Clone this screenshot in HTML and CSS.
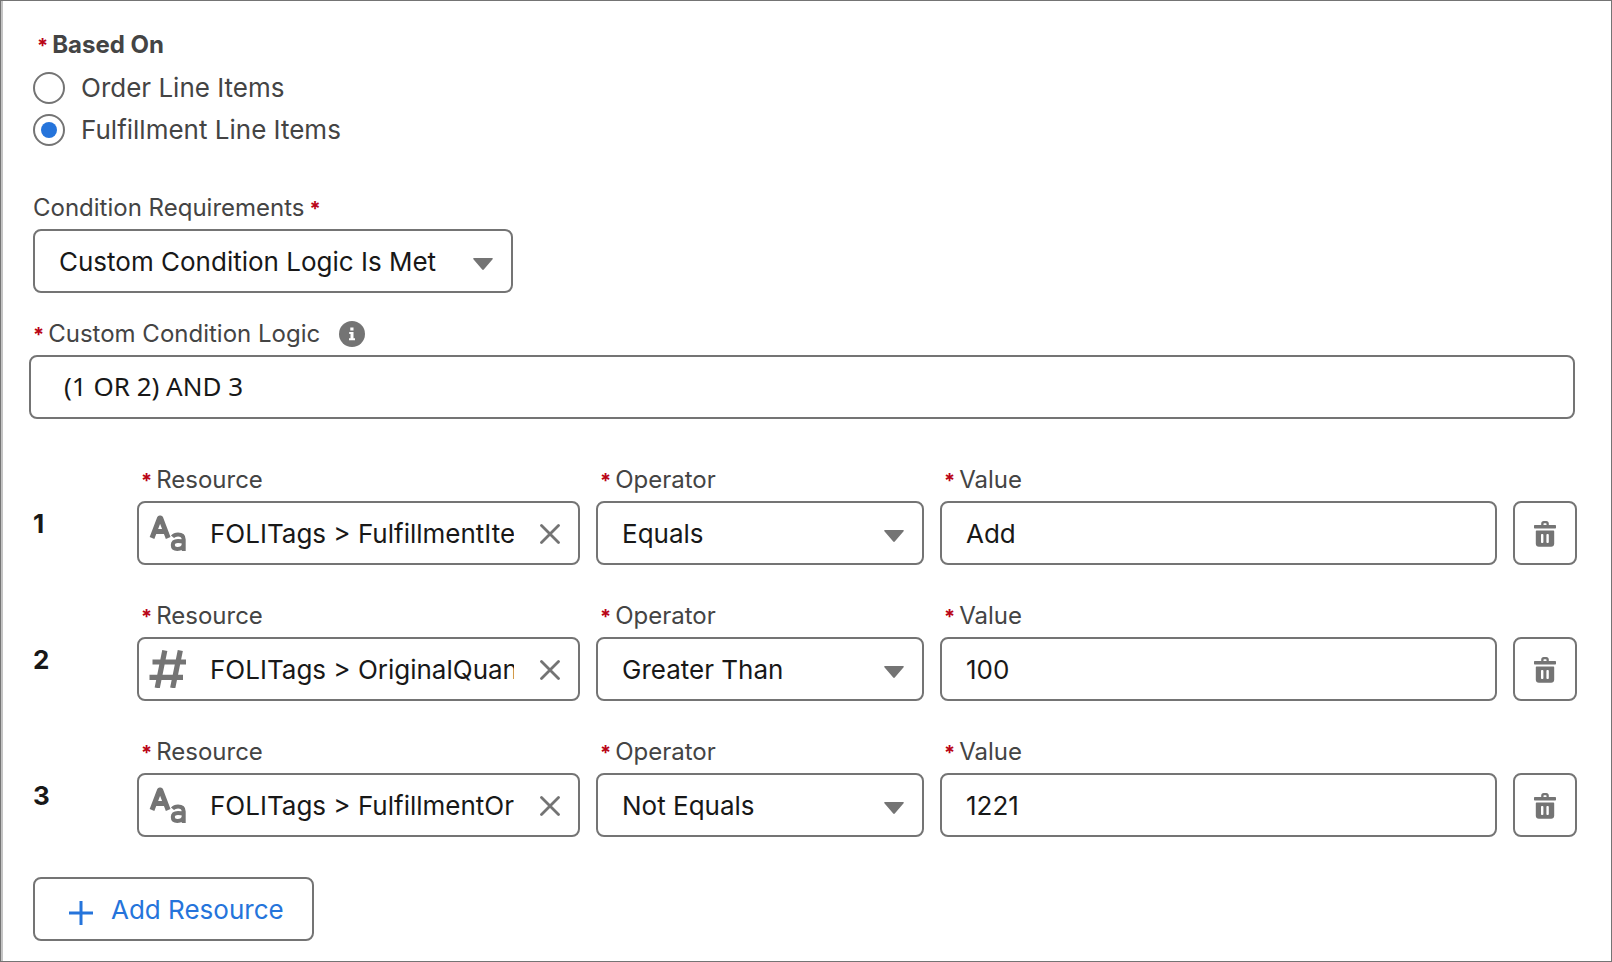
FILE: index.html
```html
<!DOCTYPE html>
<html lang="en">
<head>
<meta charset="utf-8">
<title>Condition Requirements</title>
<link rel="stylesheet" href="styles.css">
</head>
<body>
<svg class="sprite" aria-hidden="true">
  <symbol id="arrow" viewBox="0 0 20 12"><path d="M1 0h18c1 0 1 .8.6 1.300L10.800 11.500c-.5.6-1.100.6-1.600 0L.4 1.300C0 .8 0 0 1 0z"/></symbol>
  <symbol id="close" viewBox="0 0 20 20"><path d="M1.500 1.500l17 17M18.500 1.500l-17 17" fill="none" stroke="currentColor" stroke-width="2.800" stroke-linecap="round"/></symbol>
  <symbol id="trash" viewBox="0 0 22 26"><path fill-rule="evenodd" d="M1 4h6.200V2.500C7.200 1 8.200 0 9.700 0h2.600c1.500 0 2.500 1 2.500 2.500V4H21c.6 0 1 .4 1 1v1.500c0 .6-.4 1-1 1H1c-.6 0-1-.4-1-1V5c0-.6.4-1 1-1zm8.500 0h3V2.800c0-.3-.2-.5-.5-.5h-2c-.3 0-.5.2-.5.5zM2.800 9.500h16.400c.6 0 1 .4 1 1v12.200c0 1.800-1.300 3.100-3.100 3.100H4.900c-1.800 0-3.100-1.300-3.100-3.100V10.500c0-.6.4-1 1-1zM8.200 13c-.7 0-1.200.4-1.200 1v7c0 .6.500 1 1.200 1s1.200-.4 1.200-1v-7c0-.6-.5-1-1.200-1zm5.400 0c-.7 0-1.200.4-1.200 1v7c0 .6.500 1 1.200 1s1.200-.4 1.200-1v-7c0-.6-.5-1-1.200-1z"/></symbol>
  <symbol id="text-type" viewBox="0 0 38 38">
    <path fill="none" stroke="currentColor" stroke-width="5" stroke-linejoin="round" d="M3 24L10.600 4h1L19.200 24M6 17.500h10.500"/>
    <path fill="none" stroke="currentColor" stroke-width="4" d="M23.500 22.800c1.500-1.800 3.500-2.400 5.500-2.400 3.600 0 5.700 1.600 5.700 5V37M34.700 27.700c-2-.5-3.700-.7-5.700-.7-3.400 0-5.200 1.500-5.200 4s1.800 3.900 4.500 3.900c3.200 0 6.400-1.900 6.400-5"/>
  </symbol>
  <symbol id="number-type" viewBox="0 0 38 38"><path fill="none" stroke="currentColor" stroke-width="5.200" d="M15.800.5L8.200 38M31.300.5L23.700 38M3.500 12h33.500M.5 27.300h33.500"/></symbol>
</svg>
<form class="panel">
  <fieldset class="choices">
    <legend class="label label--strong"><span class="req">*</span>Based On</legend>
    <label class="choice"><input type="radio" name="basis">Order Line Items</label>
    <label class="choice"><input type="radio" name="basis" checked>Fulfillment Line Items</label>
  </fieldset>

  <div class="field field--requirements">
    <label class="label label--flush" for="req">Condition Requirements<span class="req">*</span></label>
    <div class="select"><select id="req"><option>Custom Condition Logic Is Met</option></select><svg class="arrow"><use href="#arrow"/></svg></div>
  </div>

  <div class="field field--logic">
    <div class="label-line">
      <label class="label" for="logic"><span class="req">*</span>Custom Condition Logic</label>
      <svg class="info" viewBox="0 0 26 26"><circle cx="13" cy="13" r="13"/><path fill="#fff" d="M11.300 6.500h3.200v3h-3.200zM10.200 11h4.300v6.200H16v2h-6v-2h1.500v-4.200h-1.300z"/></svg>
    </div>
    <input class="control control--logic" id="logic" type="text" value="(1 OR 2) AND 3">
  </div>

  <div class="conditions">
    <div class="condition">
      <span class="index">1</span>
      <div class="field resource">
        <label class="label" for="r1"><span class="req">*</span>Resource</label>
        <div class="lookup"><svg class="type"><use href="#text-type"/></svg><input id="r1" type="text" value="FOLITags &gt; FulfillmentItemAction"><button class="clear" type="button" aria-label="Clear"><svg><use href="#close"/></svg></button></div>
      </div>
      <div class="field operator">
        <label class="label" for="o1"><span class="req">*</span>Operator</label>
        <div class="select"><select id="o1"><option>Equals</option></select><svg class="arrow"><use href="#arrow"/></svg></div>
      </div>
      <div class="field value">
        <label class="label" for="v1"><span class="req">*</span>Value</label>
        <input class="control" id="v1" type="text" value="Add">
      </div>
      <button class="delete" type="button" aria-label="Delete"><svg><use href="#trash"/></svg></button>
    </div>
    <div class="condition">
      <span class="index">2</span>
      <div class="field resource">
        <label class="label" for="r2"><span class="req">*</span>Resource</label>
        <div class="lookup"><svg class="type"><use href="#number-type"/></svg><input id="r2" type="text" value="FOLITags &gt; OriginalQuantity"><button class="clear" type="button" aria-label="Clear"><svg><use href="#close"/></svg></button></div>
      </div>
      <div class="field operator">
        <label class="label" for="o2"><span class="req">*</span>Operator</label>
        <div class="select"><select id="o2"><option>Greater Than</option></select><svg class="arrow"><use href="#arrow"/></svg></div>
      </div>
      <div class="field value">
        <label class="label" for="v2"><span class="req">*</span>Value</label>
        <input class="control" id="v2" type="text" value="100">
      </div>
      <button class="delete" type="button" aria-label="Delete"><svg><use href="#trash"/></svg></button>
    </div>
    <div class="condition">
      <span class="index">3</span>
      <div class="field resource">
        <label class="label" for="r3"><span class="req">*</span>Resource</label>
        <div class="lookup"><svg class="type"><use href="#text-type"/></svg><input id="r3" type="text" value="FOLITags &gt; FulfillmentOrder"><button class="clear" type="button" aria-label="Clear"><svg><use href="#close"/></svg></button></div>
      </div>
      <div class="field operator">
        <label class="label" for="o3"><span class="req">*</span>Operator</label>
        <div class="select"><select id="o3"><option>Not Equals</option></select><svg class="arrow"><use href="#arrow"/></svg></div>
      </div>
      <div class="field value">
        <label class="label" for="v3"><span class="req">*</span>Value</label>
        <input class="control" id="v3" type="text" value="1221">
      </div>
      <button class="delete" type="button" aria-label="Delete"><svg><use href="#trash"/></svg></button>
    </div>
  </div>

  <button class="add" type="button"><svg viewBox="0 0 24 24"><path d="M12 0v24M0 12h24" fill="none" stroke="currentColor" stroke-width="3"/></svg>Add Resource</button>
</form>
</body>
</html>
```
FILE: styles.css
```css
* { box-sizing: border-box; }

body {
  margin: 0;
  background: #fff;
  color: #181818;
  font-family: Inter, "Liberation Sans", sans-serif;
  font-size: 26px;
  line-height: 32px;
}

input, select, button { font: inherit; color: inherit; margin: 0; }
svg { display: block; fill: currentColor; }
.sprite { position: absolute; width: 0; height: 0; }

.panel {
  display: flex;
  flex-direction: column;
  align-items: stretch;
  min-height: 100vh;
  padding: 27px 34px 20px 32px;
  border: 1px solid #747474;
  box-shadow: inset 2px 0 #c4c4c4;
}

.label {
  display: block;
  padding-left: 4px;
  color: #444;
  font-size: 24px;
  line-height: 34px;
}
.label--flush { padding-left: 0; }
.label--strong { font-weight: 700; }
.label--flush .req { margin: 0 0 0 5px; }
.req { margin-right: 4px; color: #ba0517; font-size: 20px; font-weight: 700; line-height: 1; }

.choices { min-width: 0; margin: 0 0 45px; padding: 0; border: 0; }
.choices legend { margin-bottom: 10px; padding-right: 0; }
.choice { display: flex; align-items: center; gap: 16px; color: #444; }
.choice + .choice { margin-top: 10px; }
.choice input {
  appearance: none;
  display: grid;
  place-items: center;
  width: 32px;
  height: 32px;
  border: 2px solid #747474;
  border-radius: 50%;
}
.choice input:checked::before {
  content: "";
  width: 16px;
  height: 16px;
  border-radius: 50%;
  background: #2574db;
}

.field { display: flex; flex-direction: column; gap: 4px; min-width: 0; }
.field--requirements { max-width: 480px; margin-bottom: 24px; }
.field--logic { margin: 0 2px 44px -4px; }
.label-line { display: flex; align-items: center; gap: 19px; }
.info { width: 26px; height: 26px; color: #747474; }

.control, .select select, .lookup, .delete, .add {
  height: 64px;
  border: 2px solid #747474;
  border-radius: 8px;
  background: #fff;
}
.control { width: 100%; padding: 0 24px; }
.control--logic { padding: 0 33px 2px; font-family: "Noto Sans", "Open Sans", sans-serif; }

.select { display: grid; align-items: center; }
.select select { grid-area: 1 / 1; width: 100%; padding: 2px 48px 0 24px; appearance: none; }
.arrow {
  grid-area: 1 / 1;
  justify-self: end;
  width: 20px;
  height: 12px;
  margin: 5px 20px 0 0;
  color: #747474;
  pointer-events: none;
}

.conditions { display: grid; gap: 34px; margin-bottom: 40px; }
.condition {
  display: grid;
  grid-template-columns: 88px minmax(0, 443fr) minmax(0, 328fr) minmax(0, 557fr) 64px;
  column-gap: 16px;
}
.index { padding-top: 45px; font-weight: 700; }

.lookup { display: flex; align-items: center; padding: 0 18px 0 10px; color: #747474; }
.lookup input {
  flex: 1;
  min-width: 0;
  margin: 0 26px 0 23px;
  padding: 2px 0 0;
  border: 0;
  background: none;
  color: #181818;
}
.type { flex: none; width: 38px; height: 38px; }
.clear { padding: 2px 0 0; border: 0; background: none; color: #747474; }
.clear svg { width: 20px; height: 20px; }

.delete { display: grid; place-items: center; align-self: end; padding: 2px 0 0; color: #747474; }
.delete svg { width: 22px; height: 26px; }

.add {
  display: flex;
  align-items: center;
  align-self: flex-start;
  gap: 18px;
  padding: 2px 28px 0 34px;
  color: #2574db;
}
.add svg { width: 24px; height: 24px; margin-top: 6px; }
```
